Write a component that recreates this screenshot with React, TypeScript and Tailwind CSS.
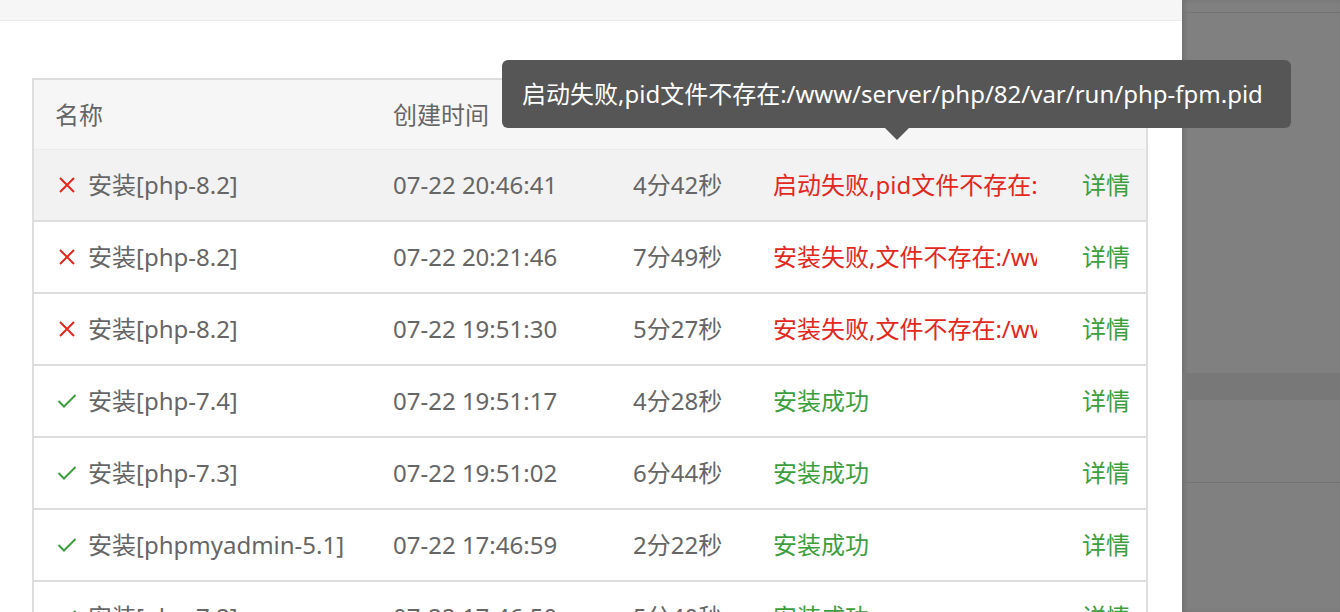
import React from "react";

type Row = {
  ok: boolean;
  name: string;
  time: string;
  dur: string;
  status: string;
};

const rows: Row[] = [
  { ok: false, name: "安装[php-8.2]", time: "07-22 20:46:41", dur: "4分42秒", status: "启动失败,pid文件不存在:/www/server/php/82/var/run/php-fpm.pid" },
  { ok: false, name: "安装[php-8.2]", time: "07-22 20:21:46", dur: "7分49秒", status: "安装失败,文件不存在:/www/server/php/82/bin/php" },
  { ok: false, name: "安装[php-8.2]", time: "07-22 19:51:30", dur: "5分27秒", status: "安装失败,文件不存在:/www/server/php/82/bin/php" },
  { ok: true, name: "安装[php-7.4]", time: "07-22 19:51:17", dur: "4分28秒", status: "安装成功" },
  { ok: true, name: "安装[php-7.3]", time: "07-22 19:51:02", dur: "6分44秒", status: "安装成功" },
  { ok: true, name: "安装[phpmyadmin-5.1]", time: "07-22 17:46:59", dur: "2分22秒", status: "安装成功" },
  { ok: true, name: "安装[php-7.2]", time: "07-22 17:46:50", dur: "5分40秒", status: "安装成功" },
];

const font = { fontFamily: '"Noto Sans", "Noto Sans CJK SC", sans-serif' };

function XIcon() {
  return (
    <svg width="18" height="18" viewBox="0 0 18 18" className="shrink-0">
      <path d="M2 2 L16 16 M16 2 L2 16" stroke="#e2281f" strokeWidth="2" fill="none" />
    </svg>
  );
}

function CheckIcon() {
  return (
    <svg width="20" height="18" viewBox="0 0 20 18" className="shrink-0">
      <path d="M1.5 9 L7 14.5 L18.5 3" stroke="#3d9e3d" strokeWidth="2" fill="none" />
    </svg>
  );
}

export default function App() {
  return (
    <div className="flex h-[612px] w-[1340px] overflow-hidden bg-white text-[24px] leading-[32px]" style={font}>
      <div className="relative w-[1182px] shrink-0 bg-white">
        <div className="h-[21px] bg-[#f6f6f6] border-b border-[#ececec]" />
        <div className="pl-[32px] pt-[57px] w-[1148px]">
          <div className="border-l-2 border-r-2 border-t-2 border-[#dedede]">
            <div className="grid grid-cols-[337px_240px_140px_308px_1fr] h-[70px] items-center bg-[#f6f6f6] border-b border-[#ececf0] text-[#666]">
              <div className="pl-[21px]">名称</div>
              <div className="pl-[22px]">创建时间</div>
              <div className="pl-[22px]">耗时</div>
              <div className="pl-[22px]">状态</div>
              <div className="pr-[16px] text-right">操作</div>
            </div>
            {rows.map((r, i) => (
              <div
                key={i}
                className={`grid grid-cols-[337px_240px_140px_308px_1fr] h-[72px] items-center border-b-2 border-[#dedede] ${
                  i === 0 ? "bg-[#f2f2f2]" : "bg-white"
                }`}
              >
                <div className="flex items-center gap-[10px] pl-[22px] text-[#666] whitespace-nowrap">
                  <span className="w-[22px] flex justify-center">{r.ok ? <CheckIcon /> : <XIcon />}</span>
                  <span>{r.name}</span>
                </div>
                <div className="pl-[22px] text-[#666] whitespace-nowrap">{r.time}</div>
                <div className="pl-[22px] text-[#666] whitespace-nowrap">{r.dur}</div>
                <div className="pl-[22px] pr-[22px] whitespace-nowrap overflow-hidden">
                  <div className={`overflow-hidden ${r.ok ? "text-[#3d9e3d]" : "text-[#e2281f]"}`}>{r.status}</div>
                </div>
                <div className="pr-[16px] text-right text-[#3d9e3d] whitespace-nowrap">详情</div>
              </div>
            ))}
          </div>
        </div>

        {/* tooltip */}
        <div className="absolute left-[502px] top-[60px] w-[789px] h-[68px] rounded-[6px] bg-[#565656] text-white flex items-center pl-[20px] whitespace-nowrap z-10">
          启动失败,pid文件不存在:/www/server/php/82/var/run/php-fpm.pid
          <div className="absolute left-[383px] top-[68px] w-0 h-0 border-l-[12px] border-r-[12px] border-t-[12px] border-l-transparent border-r-transparent border-t-[#565656]" />
        </div>
      </div>

      <div className="flex-1 flex flex-col bg-[#808080] shadow-[inset_3px_0_4px_rgba(0,0,0,0.12)]">
        <div className="h-[12px]" />
        <div className="h-[1px] bg-[#737373]" />
        <div className="h-[360px]" />
        <div className="h-[27px] bg-[#787878]" />
        <div className="h-[82px]" />
        <div className="h-[1px] bg-[#737373]" />
        <div className="flex-1" />
      </div>
    </div>
  );
}
